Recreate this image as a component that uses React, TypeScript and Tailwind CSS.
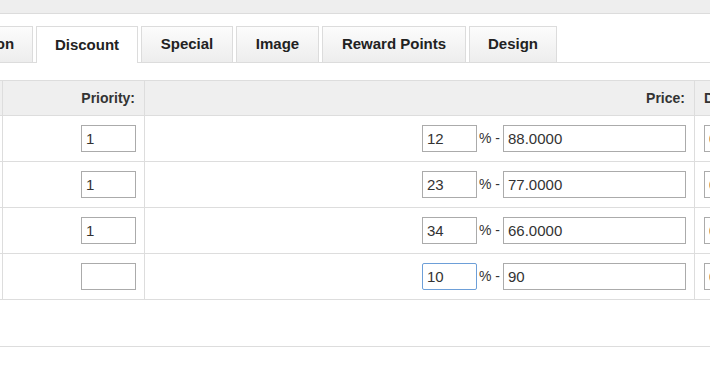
const tabs = [
  { label: 'Option', w: 'w-[86px]' },
  { label: 'Discount', w: 'w-[102px]', active: true },
  { label: 'Special', w: 'w-[92px]' },
  { label: 'Image', w: 'w-[83px]' },
  { label: 'Reward Points', w: 'w-[144px]' },
  { label: 'Design', w: 'w-[88px]' },
];

const rows = [
  { priority: '1', percent: '12', price: '88.0000' },
  { priority: '1', percent: '23', price: '77.0000' },
  { priority: '1', percent: '34', price: '66.0000' },
  { priority: '', percent: '10', price: '90', focused: true },
];

const inputBase = 'h-[27px] shrink-0 border bg-white px-[4px] text-[15px] text-[#333] outline-none';

function Tab({ label, w, active }: { label: string; w: string; active?: boolean }) {
  if (active) {
    return (
      <div
        className={`${w} shrink-0 h-[37px] -mb-px flex items-center justify-center border border-b-0 border-[#dcdcdc] bg-white text-[15px] font-bold text-[#222]`}
      >
        {label}
      </div>
    );
  }
  return (
    <div
      className={`${w} shrink-0 h-[36px] flex items-center justify-center border border-b-0 border-[#dcdcdc] bg-gradient-to-b from-[#fcfcfc] to-[#ededed] text-[15px] font-bold text-[#222]`}
    >
      {label}
    </div>
  );
}

export default function App() {
  return (
    <div
      className="w-[710px] h-[380px] overflow-hidden bg-white"
      style={{ fontFamily: '"Liberation Sans", Arial, sans-serif' }}
    >
      <div className="h-[14px] bg-[#eeeeee] border-b border-[#dcdcdc]" />

      <div className="mt-[12px] h-[37px] flex items-end gap-[3px] border-b border-[#dcdcdc] -ml-[53px]">
        {tabs.map((t) => (
          <Tab key={t.label} label={t.label} w={t.w} active={t.active} />
        ))}
      </div>

      <div className="mt-[17px] w-[820px]">
        <div className="flex h-[36px] border-y border-[#dddddd] bg-[#efefef] text-[14px] font-bold text-[#333] whitespace-nowrap">
          <div className="w-[3px] shrink-0 border-r border-[#dddddd]" />
          <div className="w-[142px] shrink-0 border-r border-[#dddddd] flex items-center justify-end pr-[9px]">
            Priority:
          </div>
          <div className="w-[550px] shrink-0 border-r border-[#dddddd] flex items-center justify-end pr-[9px]">
            Price:
          </div>
          <div className="flex-1 flex items-center pl-[9px]">Date Start:</div>
        </div>

        {rows.map((r, i) => (
          <div key={i} className="flex h-[46px] border-b border-[#dddddd]">
            <div className="w-[3px] shrink-0 border-r border-[#dddddd]" />
            <div className="w-[142px] shrink-0 border-r border-[#dddddd] flex items-center justify-end pr-[8px]">
              <input readOnly value={r.priority} className={`${inputBase} border-[#ababab] w-[55px]`} />
            </div>
            <div className="w-[550px] shrink-0 border-r border-[#dddddd] flex items-center justify-end pr-[8px] text-[14px] text-[#333]">
              <input
                readOnly
                value={r.percent}
                className={
                  r.focused
                    ? `${inputBase} w-[55px] border-[#6d9fd8] rounded-[2px]`
                    : `${inputBase} w-[55px] border-[#ababab]`
                }
              />
              <span className="ml-[2px] mr-[3px] whitespace-pre">{'% -'}</span>
              <input readOnly value={r.price} className={`${inputBase} border-[#ababab] w-[183px]`} />
            </div>
            <div className="flex-1 flex items-center pl-[9px]">
              <input readOnly value="0000-00-00" className={`${inputBase} border-[#ababab] w-[100px]`} />
            </div>
          </div>
        ))}

        <div className="h-[47px] border-b border-[#dddddd]" />
      </div>
    </div>
  );
}
